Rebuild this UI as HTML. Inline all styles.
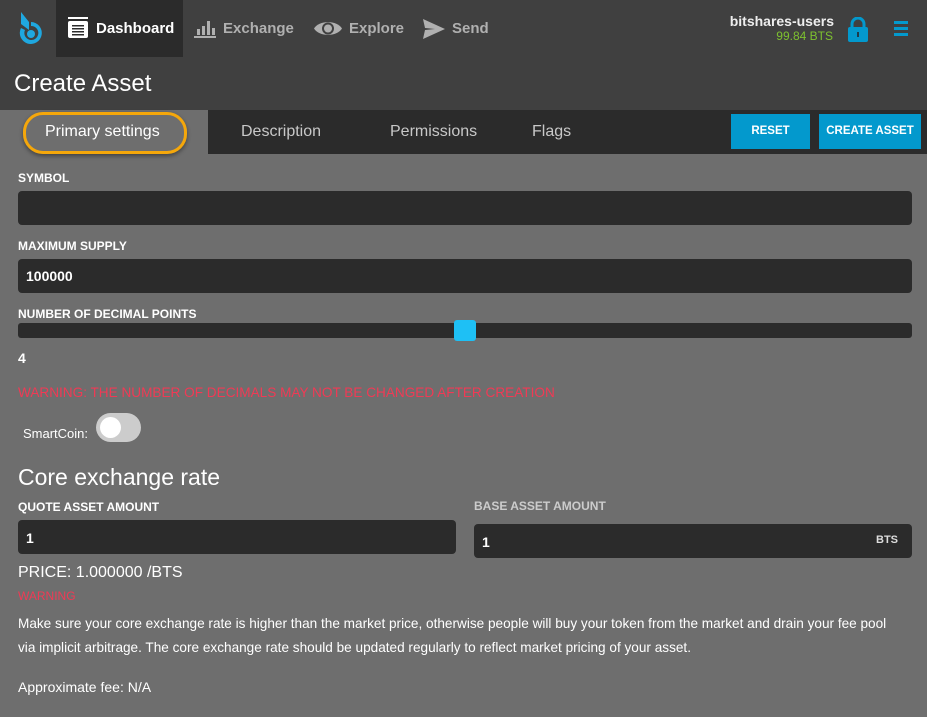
<!DOCTYPE html>
<html><head><style>
*{margin:0;padding:0;box-sizing:border-box}
body{width:927px;height:717px;overflow:hidden;background:#6e6e6e;font-family:"Liberation Sans",sans-serif;color:#fff;position:relative}
.a{position:absolute}
.top{left:0;top:0;width:927px;height:110px;background:#404040}
.nav{top:0;height:57px;font-size:15px;font-weight:bold;color:#b0b0b0;line-height:57px}
.lbl{font-size:12px;font-weight:bold;color:#fff;left:18px}
.inp{background:#2b2b2b;border-radius:4px;height:34px}
.tab{font-size:16px;color:#c8c8c8;top:123px}
.btn{background:#0399cd;color:#fff;font-size:11.5px;font-weight:bold;text-align:center;line-height:35px;top:114px;height:35px}
</style></head><body>
<div class="a top"></div>
<svg class="a" style="left:19px;top:12px" width="24" height="34" viewBox="0 0 24 34"><path d="M2 0 L10 10 L10 18 L2 12Z" fill="#1fa8e0"/><path d="M12 10a11 11 0 1 1 -10 6 l4 2a7 7 0 1 0 6 -4z" fill="#1fa8e0"/><circle cx="12" cy="22" r="4" fill="#1fa8e0"/></svg>
<div class="a" style="left:56px;top:0;width:127px;height:57px;background:#2b2b2b"></div>
<svg class="a" style="left:68px;top:17px" width="20" height="21" viewBox="0 0 20 21"><rect x="0" y="0" width="20" height="2" fill="#fff"/><rect x="0" y="4" width="20" height="17" rx="2" fill="#fff"/><g fill="#2b2b2b"><rect x="4" y="8" width="12" height="1.5"/><rect x="4" y="11" width="12" height="1.5"/><rect x="4" y="14" width="12" height="1.5"/><rect x="4" y="17" width="12" height="1.5"/></g></svg>
<div class="a nav" style="left:96px;color:#fff">Dashboard</div>
<svg class="a" style="left:194px;top:19px" width="22" height="19" viewBox="0 0 22 19"><g fill="#b0b0b0"><rect x="3" y="10" width="3" height="6"/><rect x="8" y="7" width="3" height="9"/><rect x="13" y="2" width="3" height="14"/><rect x="18" y="9" width="3" height="7"/><rect x="0" y="17" width="22" height="2"/></g></svg>
<div class="a nav" style="left:223px">Exchange</div>
<svg class="a" style="left:313px;top:19px" width="30" height="19" viewBox="0 0 30 19"><path d="M1 9.5C6 1 24 1 29 9.5 24 18 6 18 1 9.5Z" fill="#b0b0b0"/><circle cx="15" cy="9.5" r="6" fill="#404040"/><circle cx="15" cy="9.5" r="4" fill="#b0b0b0"/></svg>
<div class="a nav" style="left:349px">Explore</div>
<svg class="a" style="left:423px;top:19px" width="22" height="20" viewBox="0 0 22 20"><path d="M0 0L22 10 0 20 2 11 12 10 2 9Z" fill="#b0b0b0"/></svg>
<div class="a nav" style="left:452px">Send</div>
<div class="a" style="right:93px;top:13px;font-size:14px;font-weight:bold;color:#eee;text-align:right">bitshares-users</div>
<div class="a" style="right:94px;top:29px;font-size:12px;color:#7dc12f">99.84 BTS</div>
<svg class="a" style="left:848px;top:17px" width="20" height="25" viewBox="0 0 20 25"><path d="M4 11V7a6 6 0 0 1 12 0v4" stroke="#0399cd" stroke-width="3" fill="none"/><rect x="0" y="10" width="20" height="15" rx="2" fill="#0399cd"/><rect x="9" y="15" width="2" height="5" fill="#1e3b4a"/></svg>
<div class="a" style="left:894px;top:21px;width:14px;height:3px;background:#0399cd;box-shadow:0 6px 0 #0399cd,0 12px 0 #0399cd"></div>
<div class="a" style="left:14px;top:70px;font-size:24px;color:#fff">Create Asset</div>
<div class="a" style="left:0;top:110px;width:927px;height:44px;background:#2b2b2b"></div>
<div class="a" style="left:0;top:110px;width:208px;height:44px;background:#6e6e6e"></div>
<div class="a" style="left:23px;top:112px;width:164px;height:42px;border:3px solid #f5a70a;border-radius:20px;box-shadow:0 2px 4px rgba(0,0,0,.4)"></div>
<div class="a tab" style="left:45px;color:#fff">Primary settings</div>
<div class="a tab" style="left:241px">Description</div>
<div class="a tab" style="left:390px">Permissions</div>
<div class="a tab" style="left:532px">Flags</div>
<div class="a btn" style="left:731px;width:79px">RESET</div>
<div class="a btn" style="left:819px;width:102px">CREATE ASSET</div>
<div class="a lbl" style="top:171px">SYMBOL</div>
<div class="a inp" style="left:18px;top:191px;width:894px"></div>
<div class="a lbl" style="top:239px">MAXIMUM SUPPLY</div>
<div class="a inp" style="left:18px;top:259px;width:894px"></div>
<div class="a" style="left:26px;top:268px;font-size:14px;font-weight:bold">100000</div>
<div class="a lbl" style="top:307px">NUMBER OF DECIMAL POINTS</div>
<div class="a" style="left:18px;top:323px;width:894px;height:15px;background:#2b2b2b;border-radius:3px"></div>
<div class="a" style="left:454px;top:320px;width:22px;height:21px;background:#1ec0f5;border-radius:3px"></div>
<div class="a" style="left:18px;top:350px;font-size:14px;font-weight:bold">4</div>
<div class="a" style="left:18px;top:385px;font-size:13.6px;color:#f03a55">WARNING: THE NUMBER OF DECIMALS MAY NOT BE CHANGED AFTER CREATION</div>
<div class="a" style="left:23px;top:426px;font-size:13px">SmartCoin:</div>
<div class="a" style="left:96px;top:413px;width:45px;height:29px;background:#ccc;border-radius:15px"></div>
<div class="a" style="left:100px;top:417px;width:21px;height:21px;background:#fff;border-radius:50%"></div>
<div class="a" style="left:18px;top:464px;font-size:23px">Core exchange rate</div>
<div class="a lbl" style="top:500px">QUOTE ASSET AMOUNT</div>
<div class="a inp" style="left:18px;top:520px;width:438px"></div>
<div class="a" style="left:26px;top:530px;font-size:14px;font-weight:bold">1</div>
<div class="a lbl" style="left:474px;top:499px;color:#ccc">BASE ASSET AMOUNT</div>
<div class="a inp" style="left:474px;top:524px;width:438px"></div>
<div class="a" style="left:482px;top:534px;font-size:14px;font-weight:bold">1</div>
<div class="a" style="left:876px;top:534px;font-size:11px;font-weight:bold;color:#ddd">BTS</div>
<div class="a" style="left:18px;top:564px;font-size:16px">PRICE: 1.000000 /BTS</div>
<div class="a" style="left:18px;top:589px;font-size:12px;color:#f03a55">WARNING</div>
<div class="a" style="left:18px;top:612px;width:875px;font-size:13.6px;line-height:24px">Make sure your core exchange rate is higher than the market price, otherwise people will buy your token from the market and drain your fee pool via implicit arbitrage. The core exchange rate should be updated regularly to reflect market pricing of your asset.</div>
<div class="a" style="left:18px;top:679px;font-size:14px">Approximate fee: N/A</div>
</body></html>
